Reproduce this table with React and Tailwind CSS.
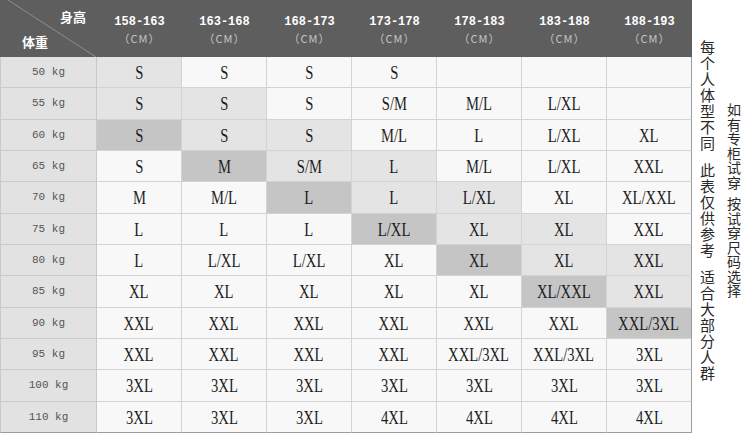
import React from 'react';

const heights = ['158-163', '163-168', '168-173', '173-178', '178-183', '183-188', '188-193'];

const rows = [
  ['50 kg', ['S', 'S', 'S', 'S', '', '', '']],
  ['55 kg', ['S', 'S', 'S', 'S/M', 'M/L', 'L/XL', '']],
  ['60 kg', ['S', 'S', 'S', 'M/L', 'L', 'L/XL', 'XL']],
  ['65 kg', ['S', 'M', 'S/M', 'L', 'M/L', 'L/XL', 'XXL']],
  ['70 kg', ['M', 'M/L', 'L', 'L', 'L/XL', 'XL', 'XL/XXL']],
  ['75 kg', ['L', 'L', 'L', 'L/XL', 'XL', 'XL', 'XXL']],
  ['80 kg', ['L', 'L/XL', 'L/XL', 'XL', 'XL', 'XL', 'XXL']],
  ['85 kg', ['XL', 'XL', 'XL', 'XL', 'XL', 'XL/XXL', 'XXL']],
  ['90 kg', ['XXL', 'XXL', 'XXL', 'XXL', 'XXL', 'XXL', 'XXL/3XL']],
  ['95 kg', ['XXL', 'XXL', 'XXL', 'XXL', 'XXL/3XL', 'XXL/3XL', '3XL']],
  ['100 kg', ['3XL', '3XL', '3XL', '3XL', '3XL', '3XL', '3XL']],
  ['110 kg', ['3XL', '3XL', '3XL', '4XL', '4XL', '4XL', '4XL']],
];

// diagonal band: dark cell, two light cells trailing it
const shade = (r, c) => {
  if (c === r - 2) return 'bg-[#c5c5c5]';
  if (c === r || c === r - 1) return 'bg-[#e4e4e4]';
  return 'bg-[#f8f8f8]';
};

const App = () => {
  const last = rows.length - 1;

  return (
    <div className="w-[750px] h-[437px] bg-white flex overflow-hidden">
      <div className="grid grid-cols-[97px_repeat(7,85px)] grid-rows-[57px_repeat(12,31.33px)] w-[692px] h-[433px] self-start">
        {/* corner cell */}
        <div className="relative bg-[#5e5e5e] font-['Noto_Sans_CJK_SC',sans-serif] font-bold text-[13px] text-white">
          <svg className="absolute inset-0" width="97" height="57">
            <line x1="8" y1="0" x2="96" y2="57" stroke="#8e8e8e" strokeWidth="1" />
          </svg>
          <span className="absolute left-[60px] top-[8px] leading-[18px]">身高</span>
          <span className="absolute left-[22px] top-[33px] leading-[18px]">体重</span>
        </div>

        {heights.map((h) => (
          <div key={h} className="bg-[#5e5e5e] flex flex-col items-center pt-[15px]">
            <span className="font-['Liberation_Mono',monospace] font-bold text-[12px] leading-[15px] text-white">{h}</span>
            <span className="mt-[1px] font-['Noto_Sans_CJK_SC',sans-serif] text-[11px] leading-[15px] tracking-[1px] text-[#c4c4c4]">（CM）</span>
          </div>
        ))}

        {rows.map(([w, sizes], r) => (
          <React.Fragment key={w}>
            <div
              className={`flex items-center justify-center bg-[#e2e2e2] border-l border-r border-[#c9c9c9] font-['Liberation_Mono',monospace] text-[11px] text-[#555] ${
                r === last ? 'border-b border-b-[#9c9c9c]' : 'border-b border-b-[#cbcbcb]'
              }`}
            >
              {w}
            </div>
            {sizes.map((s, c) => (
              <div
                key={c}
                className={`flex items-center justify-center border-r border-b ${shade(r, c)} ${
                  c === 6 ? 'border-r-[#9c9c9c]' : 'border-r-[#d3d3d3]'
                } ${r === last ? 'border-b-[#9c9c9c]' : 'border-b-[#d3d3d3]'}`}
              >
                <span className="inline-block scale-x-[0.77] pt-[2px] font-['Liberation_Serif',serif] text-[19px] leading-[20px] text-[#1c1c1c] whitespace-nowrap">
                  {s}
                </span>
              </div>
            ))}
          </React.Fragment>
        ))}
      </div>

      <div className="flex pl-[8px] gap-[12px] font-['Noto_Sans_CJK_SC',sans-serif] text-[#2a2a2a]">
        <div className="flex flex-col gap-[11px] pt-[40px]">
          {['每个人体型不同', '此表仅供参考', '适合大部分人群'].map((p) => (
            <span key={p} className="[writing-mode:vertical-rl] text-[15px] leading-[15px] tracking-[1px]">
              {p}
            </span>
          ))}
        </div>
        <div className="flex flex-col gap-[7px] pt-[103px]">
          {['如有专柜试穿', '按试穿尺码选择'].map((p) => (
            <span key={p} className="[writing-mode:vertical-rl] text-[14px] leading-[14px] tracking-[0.5px]">
              {p}
            </span>
          ))}
        </div>
      </div>
    </div>
  );
};

export default App;
